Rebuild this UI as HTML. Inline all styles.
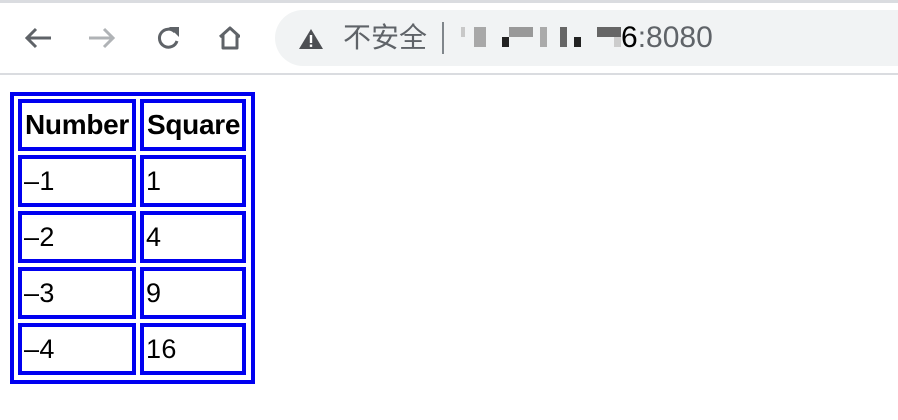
<!DOCTYPE html>
<html><head><meta charset="utf-8"><style>
body{margin:0;width:898px;height:420px;background:#fff;position:relative;overflow:hidden;font-family:"Liberation Sans",Arial,sans-serif}
.a{position:absolute}
.c{position:absolute;border:4px solid #0000f0;box-sizing:border-box;height:52px;font-size:27px;letter-spacing:0.4px;line-height:44px;padding-left:2px;color:#000}
.b{font-weight:bold;letter-spacing:0}
.px{position:absolute}
</style></head><body>
<div class="a" style="left:0;top:0;width:898px;height:3px;background:#dadce0"></div>
<div class="a" style="left:0;top:73px;width:898px;height:2px;background:#dadce0"></div>
<svg class="a" style="left:20px;top:22px" width="220" height="32" viewBox="0 0 220 32">
<path d="M31 16H7M16 7l-9 9 9 9" stroke="#5f6368" stroke-width="3" fill="none"/>
<path d="M69 16h24M84 7l9 9-9 9" stroke="#b0b3b6" stroke-width="3" fill="none"/>
<path d="M155 10a9 9 0 1 0 2 9" stroke="#5f6368" stroke-width="3" fill="none"/>
<path d="M149 5h10v10z" fill="#5f6368"/>
<path d="M200 15l10-9 10 9M203 13v13h14V13" stroke="#5f6368" stroke-width="3" fill="none" stroke-linejoin="round"/>
</svg>
<div class="a" style="left:275px;top:10px;width:660px;height:56px;border-radius:28px;background:#f1f3f4"></div>
<svg class="a" style="left:298px;top:28px" width="26" height="22" viewBox="0 0 26 22"><path d="M13 1L25 21H1z" fill="#4d4f53"/><rect x="11.8" y="7" width="2.4" height="8" fill="#fff"/><rect x="11.8" y="16.5" width="2.4" height="2.4" fill="#fff"/></svg>
<div class="a" style="left:343px;top:20px;font-size:28px;color:#5f6368;font-family:'Liberation Sans','Noto Sans CJK SC',sans-serif;line-height:36px">不安全</div>
<div class="a" style="left:442px;top:22px;width:2px;height:32px;background:#80868b"></div>
<div class="px" style="left:461px;top:27px;width:4px;height:10px;background:#c8c8c8"></div>
<div class="px" style="left:474px;top:27px;width:12px;height:20px;background:#a8a8a8"></div>
<div class="px" style="left:502px;top:37px;width:7px;height:10px;background:#222"></div>
<div class="px" style="left:509px;top:27px;width:24px;height:10px;background:#999"></div>
<div class="px" style="left:540px;top:27px;width:7px;height:20px;background:#aaa"></div>
<div class="px" style="left:560px;top:27px;width:7px;height:20px;background:#666"></div>
<div class="px" style="left:574px;top:37px;width:7px;height:10px;background:#222"></div>
<div class="px" style="left:597px;top:27px;width:24px;height:10px;background:#666"></div>
<div class="px" style="left:614px;top:37px;width:7px;height:10px;background:#ccc"></div>
<div class="a" style="left:621px;top:19px;font-size:30px;color:#202124;line-height:38px"><span style="color:#000">6</span><span style="color:#5f6368">:8080</span></div>
<div class="a" style="left:10px;top:92px;width:245px;height:292px;border:4px solid #0000f0;box-sizing:border-box"></div>
<div class="c b" style="left:18px;top:99px;width:118px;font-size:28px;letter-spacing:-0.3px;padding-left:3px">Number</div>
<div class="c b" style="left:140px;top:99px;width:106px;font-size:28px;letter-spacing:-0.3px;padding-left:3px">Square</div>
<div class="c" style="left:18px;top:155px;width:118px">–1</div>
<div class="c" style="left:140px;top:155px;width:106px">1</div>
<div class="c" style="left:18px;top:211px;width:118px">–2</div>
<div class="c" style="left:140px;top:211px;width:106px">4</div>
<div class="c" style="left:18px;top:267px;width:118px">–3</div>
<div class="c" style="left:140px;top:267px;width:106px">9</div>
<div class="c" style="left:18px;top:323px;width:118px">–4</div>
<div class="c" style="left:140px;top:323px;width:106px">16</div>
</body></html>
